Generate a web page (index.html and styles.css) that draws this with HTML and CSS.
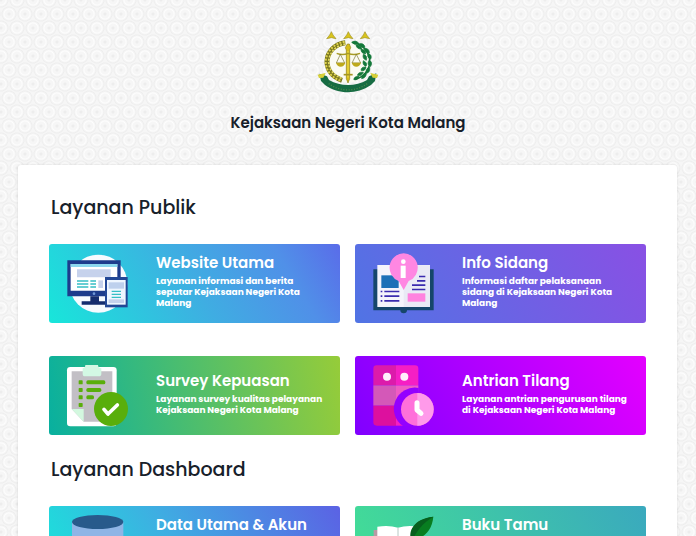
FILE: index.html
```html
<!DOCTYPE html>
<html lang="id">
<head>
<meta charset="utf-8">
<meta name="viewport" content="width=device-width, initial-scale=1">
<title>Kejaksaan Negeri Kota Malang</title>
<link rel="stylesheet" href="styles.css">
</head>
<body>
<header class="masthead">
  <svg class="logo" viewBox="0 0 240 222" aria-hidden="true">
    <g fill="#d9c41c" stroke="#a09328" stroke-width="2">
      <path d="M70 17l5 10 9 11-14-3-14 3 9-11z"/>
      <path d="M121 17l5 10 9 11-14-3-14 3 9-11z"/>
      <path d="M171 17l5 10 9 11-14-3-14 3 9-11z"/>
    </g>
    <circle cx="120" cy="107" r="63" fill="#fbfbf2"/>
    <path d="M112 50C80 54 58 78 57 106c0 26 16 47 45 57" fill="none" stroke="#77751e" stroke-width="15"/>
    <path d="M110 47C76 53 55 78 53 106c0 26 16 49 45 58" fill="none" stroke="#ded24c" stroke-width="6" stroke-dasharray="6 4"/>
    <path d="M112 54C82 59 64 80 62 106c0 24 15 43 42 52" fill="none" stroke="#e6dc62" stroke-width="5" stroke-dasharray="6 4"/>
    <path d="M132 49c31 4 52 28 53 57 0 27-19 48-46 55" fill="none" stroke="#176c36" stroke-width="4"/>
    <g fill="#14783a" stroke="#14783a" stroke-width="2">
      <path d="M131 49q14-9 22 4-13 7-22-4zM144 57q2 13 17 12-3-14-17-12zM151 54q17-5 20 10-15 3-20-10zM159 69q-1 13 14 15 1-14-14-15zM169 67q16 0 15 14-14 0-15-14zM166 85q-4 13 9 18 5-14-9-18zM180 82q14 5 8 18-13-6-8-18zM166 104q-4 13 8 17 7-10-8-17zM184 102q12 8 3 20-12-9-3-20zM174 123q-15-1-15 10 12 5 15-10zM184 122q5 15-8 20-6-11 8-20zM166 139q-14-3-18 9 12 5 18-9zM175 140q1 15-14 18-2-13 14-18zM153 151q-14-1-16 9 13 5 16-9z"/>
    </g>
    <path d="M118 54h6l4 11-3 7v86l-5 13-5-13V72l-3-7z" fill="#d7bd18" stroke="#8d801b" stroke-width="2"/>
    <path d="M120 75v80" stroke="#fff06b" stroke-width="2"/>
    <path d="M86 82q18 7 34 0 17 7 36 0" fill="none" stroke="#a79b24" stroke-width="4"/>
    <path d="M97 85l-12 26h25zM145 85l-13 26h26z" fill="none" stroke="#77732d" stroke-width="2"/>
    <path d="M84 110h28q-4 12-14 12t-14-12zM131 110h28q-4 12-14 12t-14-12z" fill="#bda91b"/>
    <path d="M107 146h27" stroke="#a49520" stroke-width="5"/>
    <path d="M34 143l23 8 6 11c35 20 80 20 114 0l6-11 22-9-4 23-12 12c-43 29-96 29-138 0l-12-12z" fill="#176c43"/>
    <path d="M29 146l24-5-7 14-13 1zM211 146l-24-5 7 14 13 1z" fill="#d6cf38"/>
    <path d="M62 173c35 25 80 25 116 0" fill="none" stroke="#4d8a4b" stroke-width="4" stroke-dasharray="3 5"/>
  </svg>
  <h1 class="masthead__title">Kejaksaan Negeri Kota Malang</h1>
</header>

<main class="panel">
  <section>
    <h2 class="section-title">Layanan Publik</h2>
    <div class="cards">
      <a class="card card--website" href="#website">
        <svg class="card__icon" viewBox="81 56 180 180" aria-hidden="true">
          <circle cx="175" cy="145" r="87" fill="#f7fbff"/>
          <path d="M82 75h160v108H82z" fill="#1d3c8c"/>
          <path d="M92 86h140v80H92z" fill="#fff"/>
          <path d="M92 86h140v9H92z" fill="#8bd8ee"/>
          <path d="M111 102h101v24H111z" fill="#c6d2ec"/>
          <path d="M111 135h34v4h-34zm0 9h34v4h-34zm0 9h34v4h-34zM151 135h17v4h-17zm0 9h17v4h-17zm0 9h17v4h-17z" fill="#35bfc5"/>
          <path d="M175 135h14v23h-14z" fill="#c6d2ec"/>
          <circle cx="162" cy="175" r="4" fill="#7299d7"/>
          <path d="M151 183h26v15h18v10h-70v-10h26z" fill="#152d6e"/>
          <path d="M195 125h68v91h-68z" fill="#234896"/>
          <path d="M201 134h56v74h-56z" fill="#eef6ff"/>
          <path d="M206 141h46v19h-46z" fill="#bdd0ed"/>
          <path d="M215 166h28v4h-28zm0 9h28v4h-28zm0 9h28v4h-28z" fill="#35bfc5"/>
          <path d="M206 192h46v11h-46z" fill="#c6d2ec"/>
        </svg>
        <div class="card__text">
          <h3 class="card__title">Website Utama</h3>
          <p class="card__desc">Layanan informasi dan berita seputar Kejaksaan Negeri Kota Malang</p>
        </div>
      </a>
      <a class="card card--sidang" href="#sidang">
        <svg class="card__icon" viewBox="84 56 180 180" aria-hidden="true">
          <path d="M85 102h181v123h-80q0 9-10 9t-10-9H85z" fill="#15466b"/>
          <path d="M97 89h76l3 8 3-8h76v126H97z" fill="#f4f4fb"/>
          <path d="M176 90h79v125h-79z" fill="#e9eaf5"/>
          <path d="M109 120h52v38h-52z" fill="#1c70b7"/>
          <path d="M107 166h5v5h-5zm11 0h45v5h-45zm-11 14h5v5h-5zm11 0h45v5h-45zm-11 14h5v5h-5zm11 0h45v5h-45zM222 121h19v5h-19zm-6 13h25v5h-25zm-15 13h40v5h-40zm0 13h40v5h-40z" fill="#3a2baf"/>
          <path d="M188 174h53v25h-53z" fill="#ff83df"/>
          <path d="M176 54a43 43 0 0 1 15 83l-15 27-15-27a43 43 0 0 1 15-83z" fill="#ff87e2"/>
          <circle cx="175" cy="79" r="7" fill="#fff"/>
          <path d="M167 91h15v37h-15z" fill="#fff"/>
        </svg>
        <div class="card__text">
          <h3 class="card__title">Info Sidang</h3>
          <p class="card__desc">Informasi daftar pelaksanaan sidang di Kejaksaan Negeri Kota Malang</p>
        </div>
      </a>
      <a class="card card--survey" href="#survey">
        <svg class="card__icon" viewBox="81 56 180 180" aria-hidden="true">
          <rect x="81" y="59" width="149" height="178" rx="10" fill="#fff"/>
          <path d="M95 72h122v151h-86l-36-38z" fill="#c2bfc5"/>
          <path d="M95 185h36v38z" fill="#d3f8df"/>
          <path d="M136 53h38q0 9 10 10v16q0 8-8 8h-41q-7 0-7-8V63q8-1 8-10z" fill="#d3f8e4"/>
          <g fill="#59ae0b">
            <rect x="116" y="99" width="12" height="12" rx="2"/><rect x="139" y="99" width="57" height="12" rx="5"/>
            <rect x="116" y="122" width="12" height="12" rx="2"/><rect x="139" y="122" width="45" height="12" rx="5"/>
            <rect x="116" y="144" width="12" height="12" rx="2"/><rect x="139" y="144" width="23" height="12" rx="5"/>
            <rect x="116" y="167" width="12" height="12" rx="2"/>
            <circle cx="213" cy="185" r="51"/>
          </g>
          <path d="M192 186l12 14 28-27" fill="none" stroke="#fff" stroke-width="11" stroke-linecap="round" stroke-linejoin="round"/>
        </svg>
        <div class="card__text">
          <h3 class="card__title">Survey Kepuasan</h3>
          <p class="card__desc">Layanan survey kualitas pelayanan Kejaksaan Negeri Kota Malang</p>
        </div>
      </a>
      <a class="card card--tilang" href="#tilang">
        <svg class="card__icon" viewBox="84 56 180 180" aria-hidden="true">
          <path d="M85 114V64q0-10 10-10h58v60z" fill="#dc1bab"/>
          <path d="M153 54h57q10 0 10 10v50h-67z" fill="#f51fc4"/>
          <path d="M85 114h68v61H85z" fill="#d458b8"/>
          <path d="M153 114h67v61h-67z" fill="#f05bc4"/>
          <path d="M85 175h68v60H95q-10 0-10-10z" fill="#dd109e"/>
          <path d="M153 175h67v60h-67z" fill="#f51fc4"/>
          <path d="M221 122a63 63 0 0 0-47 114h50z" fill="#9400ff"/>
          <circle cx="126" cy="88" r="12" fill="#fff0fb"/><circle cx="178" cy="88" r="12" fill="#fff0fb"/>
          <circle cx="217" cy="186" r="49" fill="#ff70da"/>
          <path d="M217 137a49 49 0 0 1 0 98z" fill="#ff9aea"/>
          <path d="M216 166v22l12 10" fill="none" stroke="#fff" stroke-width="15" stroke-linecap="round" stroke-linejoin="round"/>
        </svg>
        <div class="card__text">
          <h3 class="card__title">Antrian Tilang</h3>
          <p class="card__desc">Layanan antrian pengurusan tilang di Kejaksaan Negeri Kota Malang</p>
        </div>
      </a>
    </div>
  </section>

  <section class="section">
    <h2 class="section-title">Layanan Dashboard</h2>
    <div class="cards">
      <a class="card card--top card--data" href="#data">
        <svg class="card__icon" viewBox="81 198 180 180" aria-hidden="true">
          <path d="M96 219h154v134q-12 20-77 20t-77-20z" fill="#8fb5e6"/>
          <ellipse cx="173" cy="219" rx="77" ry="21" fill="#285a8b"/>
        </svg>
        <div class="card__text">
          <h3 class="card__title">Data Utama &amp; Akun</h3>
        </div>
      </a>
      <a class="card card--top card--tamu" href="#tamu">
        <svg class="card__icon" viewBox="84 198 180 180" aria-hidden="true">
          <path d="M86 243h20v120H86z" fill="#b99aa5"/>
          <path d="M97 233q36-5 62 3 26-8 62-3v128H97z" fill="#fff"/>
          <path d="M159 236v120" stroke="#b9c8c4" stroke-width="3"/>
          <path d="M265 203c-3 31-17 54-42 64l-21 30-5-2 12-31c-22-10-4-54 56-61z" fill="#087d20"/>
          <path d="M265 203c-32 19-50 42-65 75-13-31 6-69 65-75z" fill="#075f1d"/>
        </svg>
        <div class="card__text">
          <h3 class="card__title">Buku Tamu</h3>
        </div>
      </a>
    </div>
  </section>
</main>
</body>
</html>
```
FILE: styles.css
```css
* {
  box-sizing: border-box;
}

body {
  margin: 0;
  color: #17202a;
  font-family: Poppins, Inter, "Open Sans", sans-serif;
  background-color: #f6f6f6;
  background-image:
    radial-gradient(circle, #ededed 1px, transparent 2px, transparent 4px, #fdfdfd 5px, #eeeeee 7px, transparent 8px),
    radial-gradient(circle, #ededed 1px, transparent 2px, transparent 4px, #fdfdfd 5px, #eeeeee 7px, transparent 8px);
  background-position: 1px 0, 9px 14px;
  background-size: 16px 28px;
}

h1,
h2,
h3,
p {
  margin: 0;
}

.masthead {
  display: flex;
  flex-direction: column;
  align-items: center;
  padding: 26px 18px 30px;
}

.logo {
  width: 80px;
  height: 74px;
}

.masthead__title {
  margin-top: 11px;
  font-size: 15px;
  line-height: 24px;
  font-weight: 600;
}

.panel {
  margin: 0 19px 0 18px;
  padding: 29px 31px 32px;
  background: #fff;
  border-radius: 3px;
  box-shadow: 0 0 3px rgba(0, 0, 0, 0.12);
}

.section {
  margin-top: 21px;
}

.section-title {
  margin-bottom: 22px;
  padding-left: 2px;
  font-size: 19px;
  line-height: 28px;
  font-weight: 500;
}

.cards {
  display: grid;
  grid-template-columns: repeat(2, minmax(0, 1fr));
  gap: 33px 15px;
}

.card {
  display: flex;
  align-items: center;
  gap: 29px;
  min-height: 79px;
  padding: 9px 14px 8px 18px;
  border-radius: 3px;
  color: #fff;
  text-decoration: none;
}

.card--top {
  align-items: flex-start;
}

.card--website {
  background: linear-gradient(60deg, #18e6da, #3fade2 50%, #5090e8 80%, #5a6ce9);
}

.card--data {
  background: linear-gradient(60deg, #18e6da, #3fade2 45%, #5b62e4);
}

.card--sidang {
  background: linear-gradient(60deg, #5074e4, #8950e4);
}

.card--survey {
  background: linear-gradient(80deg, #08b09f, #96cc39);
}

.card--tilang {
  background: linear-gradient(60deg, #8000ff, #e400ff);
}

.card--tamu {
  background: linear-gradient(60deg, #43e094, #3aa9be);
}

.card__icon {
  flex: none;
  width: 60px;
  height: 60px;
  overflow: visible;
}

.card__text {
  flex: 1;
  min-width: 0;
  padding-bottom: 6px;
}

.card__title {
  font-size: 15px;
  line-height: 20px;
  font-weight: 600;
}

.card__desc {
  margin-top: 3px;
  font-size: 9px;
  line-height: 11px;
  font-weight: 700;
}
```
